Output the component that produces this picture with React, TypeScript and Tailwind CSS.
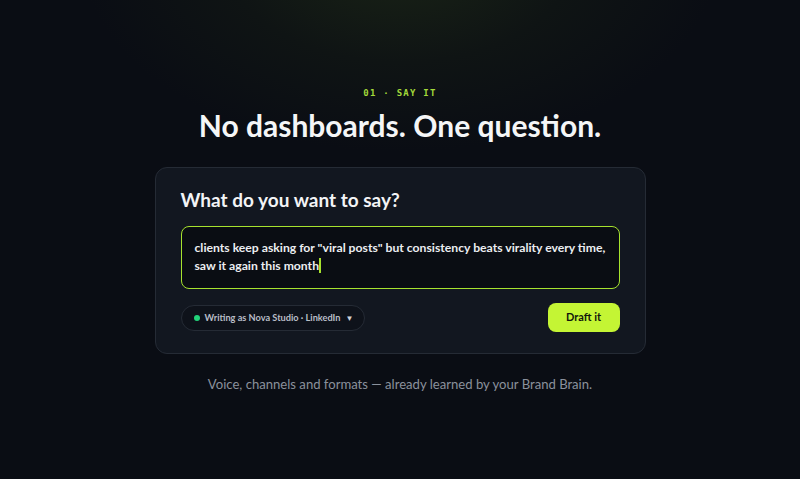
import React from 'react';

const App: React.FC = () => {
  return (
    <div
      className="w-[800px] h-[479px] overflow-hidden flex flex-col items-center bg-[#0a0d14] bg-[radial-gradient(ellipse_320px_200px_at_50%_-10%,#1a2416_0%,#0f1414_55%,#0a0d14_100%)] text-white"
      style={{ fontFamily: 'Lato, "Noto Sans", sans-serif' }}
    >
      <p
        className="mt-[87px] text-[9px] leading-[12px] tracking-[0.14em] text-[#a3d93a] font-bold"
        style={{ fontFamily: '"DejaVu Sans Mono", "Liberation Mono", monospace' }}
      >
        01 · SAY IT
      </p>
      <h1 className="mt-[8px] text-[30px] leading-[36px] font-bold text-[#f5f6f7]">
        No dashboards. One question.
      </h1>

      <div className="mt-[24px] w-[491px] rounded-[12px] border border-[#252b35] bg-[#121720] px-[25px] pt-[19px] pb-[21px]">
        <h2 className="text-[19px] leading-[26px] font-bold text-[#f3f4f6]">What do you want to say?</h2>
        <div className="mt-[13px] rounded-[8px] border-[1.5px] border-[#a6e22e] bg-[#0a0d13] pl-[13px] pr-[8px] pt-[12px] pb-[13px]">
          <p className="text-[12.2px] leading-[18px] font-bold text-[#eceef1] whitespace-nowrap">
            clients keep asking for "viral posts" but consistency beats virality every time,
            <br />
            saw it again this month
            <span className="inline-block w-[1.5px] h-[15px] bg-[#a6e22e] align-[-3px]" />
          </p>
        </div>
        <div className="mt-[14px] flex items-center justify-between">
          <div className="flex items-center h-[26px] rounded-full border border-[#252b35] bg-[#0e121a] pl-[12px] pr-[11px]">
            <span className="w-[6px] h-[6px] rounded-full bg-[#22d37a]" />
            <span className="ml-[5px] text-[9.2px] font-bold text-[#b9bec7]">Writing as Nova Studio · LinkedIn</span>
            <span className="ml-[5px] text-[8px] text-[#d0d4da]">▼</span>
          </div>
          <button className="h-[29px] w-[72px] rounded-[8px] bg-[#c4f534] text-[11px] font-bold text-[#11150c]">
            Draft it
          </button>
        </div>
      </div>

      <p className="mt-[21px] text-[13.1px] leading-[18px] text-[#8a919c]">
        Voice, channels and formats — already learned by your Brand Brain.
      </p>
    </div>
  );
};

export default App;
